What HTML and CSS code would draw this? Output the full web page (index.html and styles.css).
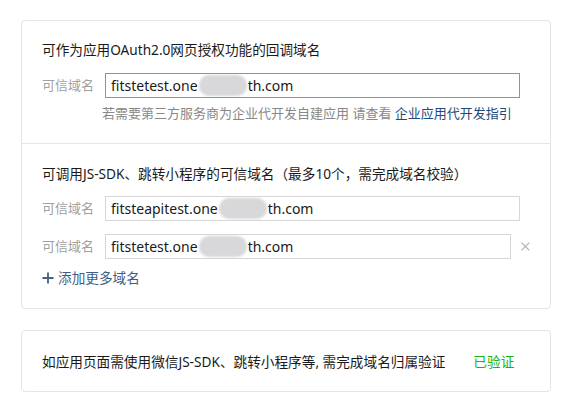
FILE: index.html
```html
<!DOCTYPE html>
<html lang="zh-CN">
<head>
<meta charset="utf-8">
<link rel="stylesheet" href="styles.css">
</head>
<body>
<div class="card">
  <section class="section section-first">
    <div class="title">可作为应用OAuth2.0网页授权功能的回调域名</div>
    <div class="row">
      <span class="label">可信域名</span>
      <div class="input focus">fitstetest.one<span class="blur"></span>th.com</div>
    </div>
    <div class="hint">若需要第三方服务商为企业代开发自建应用 请查看 <a class="link">企业应用代开发指引</a></div>
  </section>
  <section class="section">
    <div class="title">可调用JS-SDK、跳转小程序的可信域名（最多10个，需完成域名校验）</div>
    <div class="row">
      <span class="label">可信域名</span>
      <div class="input">fitsteapitest.one<span class="blur"></span>th.com</div>
    </div>
    <div class="row row-gap">
      <span class="label">可信域名</span>
      <div class="input">fitstetest.one<span class="blur"></span>th.com</div>
      <svg class="close" width="9" height="9" viewBox="0 0 9 9"><path d="M0.5 0.5L8.5 8.5M8.5 0.5L0.5 8.5" stroke="#a9b5c4" stroke-width="1.3" fill="none"/></svg>
    </div>
    <div class="add">
      <svg width="12" height="12" viewBox="0 0 12 12"><path d="M6 0.5V11.5M0.5 6H11.5" stroke="#45617f" stroke-width="1.8" fill="none"/></svg>
      <span>添加更多域名</span>
    </div>
  </section>
</div>
<div class="card card-verify">
  <span class="verify-text">如应用页面需使用微信JS-SDK、跳转小程序等, 需完成域名归属验证</span>
  <span class="verified">已验证</span>
</div>
</body>
</html>
```
FILE: styles.css
```css
html, body {
  margin: 0;
  padding: 0;
  background: #ffffff;
}
body {
  padding: 20px 0 0 21px;
  font-family: "Noto Sans", "Noto Sans CJK SC", sans-serif;
  color: #1a1a1a;
}
.card {
  width: 528px;
  border: 1px solid #e3e4e6;
  border-radius: 4px;
  box-sizing: content-box;
}
.section {
  padding: 19px 20px 20px 20px;
}
.section-first {
  padding-bottom: 21px;
  border-bottom: 1px solid #e6e7e9;
}
.section + .section {
  padding-top: 20px;
}
.title {
  font-size: 13.65px;
  line-height: 20px;
  color: #1a1a1a;
}
.row {
  display: flex;
  align-items: center;
  margin-top: 12px;
}
.section-first .row {
  margin-top: 13px;
}
.row-gap {
  margin-top: 13px;
}
.label {
  width: 63px;
  flex: none;
  font-size: 13px;
  line-height: 25px;
  color: #a0a0a0;
}
.input {
  width: 403px;
  height: 23px;
  border: 1px solid #d6d6d6;
  padding: 0 5px;
  font-size: 14px;
  line-height: 23px;
  color: #1a1a1a;
  white-space: nowrap;
  overflow: hidden;
  display: flex;
  align-items: center;
}
.input.focus {
  border-color: #6c9bd6;
}
.blur {
  display: inline-block;
  width: 48px;
  height: 21px;
  margin: 0 1px;
  background: #d8d8da;
  border-radius: 10px;
  filter: blur(1.2px);
}
.close {
  margin-left: 10px;
}
.hint {
  margin: 6px 0 0 60px;
  font-size: 13px;
  line-height: 18px;
  color: #888888;
  white-space: nowrap;
}
.link {
  color: #1d4a7c;
  text-decoration: none;
}
.add {
  display: flex;
  align-items: center;
  gap: 4px;
  margin-top: 9px;
  font-size: 13.65px;
  line-height: 20px;
  color: #3f5e7e;
}
.card-verify {
  margin-top: 21px;
  padding: 21px 20px 19px 20px;
  width: 488px;
  display: flex;
  align-items: center;
  font-size: 13.65px;
  line-height: 20px;
}
.verify-text {
  color: #1a1a1a;
}
.verified {
  margin-left: 28px;
  color: #14b414;
}
```
